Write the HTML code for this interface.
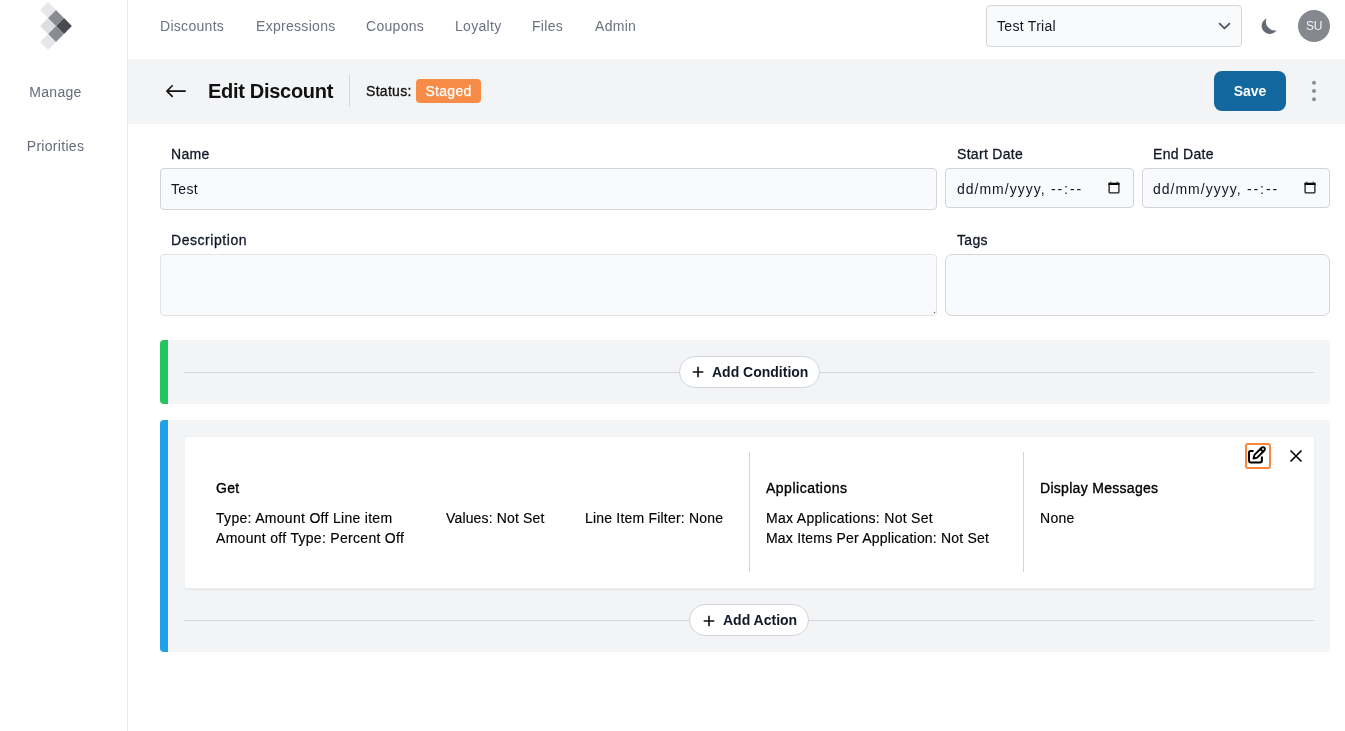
<!DOCTYPE html>
<html><head><meta charset="utf-8">
<style>
*{box-sizing:border-box;margin:0;padding:0}
html,body{width:1345px;height:731px;overflow:hidden;background:#fff;font-family:"Liberation Sans",sans-serif;color:#111827;letter-spacing:0.3px}
.med{-webkit-text-stroke:0.3px currentColor}
.abs{position:absolute}
#side{position:absolute;left:0;top:0;width:128px;height:731px;border-right:1px solid #e5e7eb;background:#fff}
.sidelink{position:absolute;left:0;width:111px;text-align:center;font-size:14px;color:#666c78}
.nav{position:absolute;top:17.5px;font-size:14px;color:#6b7280;white-space:nowrap}
#hdr{position:absolute;left:128px;top:59px;width:1217px;height:65px;background:#f3f4f6}
.lbl{position:absolute;font-size:14px;color:#111827;white-space:nowrap}
.inp{position:absolute;background:#f9fafb;border:1px solid #d1d5db;border-radius:4px}
.itxt{position:absolute;font-size:14px;color:#111827;white-space:nowrap}
.blk{position:absolute;background:#f3f4f6;border-radius:4px;overflow:hidden}
.bar{position:absolute;left:0;top:0;width:8px;height:100%}
.hline{position:absolute;height:1px;background:#d1d5db}
.pill{position:absolute;background:#fff;border:1px solid #d1d5db;border-radius:16px;font-size:14px;font-weight:bold;color:#111827;white-space:nowrap;letter-spacing:0}
.ct{position:absolute;font-size:14px;color:#000;white-space:nowrap;-webkit-text-stroke:0.15px #000}
.ct.med{-webkit-text-stroke:0.35px #000}
</style></head><body><div id="root" style="position:absolute;left:0;top:0;width:1345px;height:731px;will-change:transform">
<div id="side">
  <svg class="abs" style="left:30px;top:0px" width="50" height="55" viewBox="30 0 50 55"><polygon points="48,2.0999999999999996 55.9,10 48,17.9 40.1,10" fill="#e6e7eb"/><polygon points="48,34.1 55.9,42 48,49.9 40.1,42" fill="#e6e7eb"/><polygon points="48,18.1 55.9,26 48,33.9 40.1,26" fill="#dddee2"/><polygon points="56,10.1 63.9,18 56,25.9 48.1,18" fill="#8a8c92"/><polygon points="56,26.1 63.9,34 56,41.9 48.1,34" fill="#8a8c92"/><polygon points="64,18.1 71.9,26 64,33.9 56.1,26" fill="#4a4b51"/></svg>
  <div class="sidelink" style="top:84px">Manage</div>
  <div class="sidelink" style="top:138px">Priorities</div>
</div>

<div class="nav" style="left:160px">Discounts</div>
<div class="nav" style="left:256px">Expressions</div>
<div class="nav" style="left:366px">Coupons</div>
<div class="nav" style="left:455px">Loyalty</div>
<div class="nav" style="left:532px">Files</div>
<div class="nav" style="left:595px">Admin</div>

<div class="inp" style="left:986px;top:5px;width:256px;height:42px;border-radius:4px"></div>
<div class="itxt" style="left:997px;top:18px">Test Trial</div>
<svg class="abs" style="left:1216px;top:20px" width="16" height="12" viewBox="0 0 16 12"><path d="M3.6 3.6L8.5 8.4L13.4 3.6" fill="none" stroke="#4b5563" stroke-width="1.8" stroke-linecap="round" stroke-linejoin="round"/></svg>
<svg class="abs" style="left:1258px;top:15px" width="24" height="22" viewBox="0 0 24 22"><path fill="#646975" d="M8.6 3.4A8.1 8.1 0 1 0 18.6 15.2A8.7 8.7 0 0 1 8.6 3.4Z"/></svg>
<div class="abs" style="left:1298px;top:10px;width:32px;height:32px;border-radius:50%;background:#85888e;color:#f3f4f6;font-size:12px;text-align:center;line-height:32px;letter-spacing:-0.4px">SU</div>

<div id="hdr"></div>
<svg class="abs" style="left:164px;top:83px" width="24" height="16" viewBox="0 0 24 16"><path d="M21.2 8.1H3M8.2 2.8L2.9 8.1l5.3 5.3" fill="none" stroke="#111" stroke-width="1.6" stroke-linecap="round" stroke-linejoin="round"/></svg>
<svg class="abs" style="left:1310px;top:79px" width="8" height="24" viewBox="0 0 8 24"><circle cx="4" cy="3.8" r="2" fill="#8b8e94"/><circle cx="4" cy="11.9" r="2" fill="#8b8e94"/><circle cx="4" cy="20.2" r="2" fill="#8b8e94"/></svg>
<div class="abs" style="left:208px;top:80px;font-size:20px;font-weight:bold;color:#111;letter-spacing:-0.3px">Edit Discount</div>
<div class="abs" style="left:349px;top:75px;width:1px;height:32px;background:#d1d5db"></div>
<div class="abs med" style="left:366px;top:83px;font-size:14px;color:#111">Status:</div>
<div class="abs" style="left:416px;top:79px;width:65px;height:24px;background:#f78c48;border-radius:4px;color:#fff;font-size:14px;text-align:center;line-height:24px;-webkit-text-stroke:0.25px #fff">Staged</div>
<div class="abs" style="left:1214px;top:71px;width:72px;height:40px;background:#12679f;border-radius:8px;color:#fff;font-size:14px;font-weight:bold;text-align:center;line-height:40px;letter-spacing:0">Save</div>

<div class="lbl med" style="left:171px;top:146px">Name</div>
<div class="inp" style="left:160px;top:168px;width:777px;height:42px"></div>
<div class="itxt" style="left:171px;top:181px">Test</div>

<div class="lbl med" style="left:957px;top:146px">Start Date</div>
<div class="inp" style="left:945px;top:168px;width:189px;height:40px"></div>
<div class="itxt" style="left:957px;top:181px;letter-spacing:1px">dd/mm/yyyy,</div><div class="itxt" style="left:1051px;top:181px;letter-spacing:1.9px">--:--</div>

<svg class="abs" style="left:1108px;top:180px" width="12" height="14" viewBox="0 0 12 14"><rect x="1.1" y="3.6" width="9.8" height="9.2" rx="0.7" fill="none" stroke="#1a1a1a" stroke-width="1.3"/><rect x="0.45" y="2.7" width="11.1" height="2.3" fill="#000"/><rect x="2.2" y="1.6" width="1" height="1.4" fill="#222"/><rect x="8.8" y="1.6" width="1" height="1.4" fill="#222"/></svg>
<div class="lbl med" style="left:1153px;top:146px">End Date</div>
<div class="inp" style="left:1142px;top:168px;width:188px;height:40px"></div>
<div class="itxt" style="left:1153px;top:181px;letter-spacing:1px">dd/mm/yyyy,</div><div class="itxt" style="left:1247px;top:181px;letter-spacing:1.9px">--:--</div>

<svg class="abs" style="left:1304px;top:180px" width="12" height="14" viewBox="0 0 12 14"><rect x="1.1" y="3.6" width="9.8" height="9.2" rx="0.7" fill="none" stroke="#1a1a1a" stroke-width="1.3"/><rect x="0.45" y="2.7" width="11.1" height="2.3" fill="#000"/><rect x="2.2" y="1.6" width="1" height="1.4" fill="#222"/><rect x="8.8" y="1.6" width="1" height="1.4" fill="#222"/></svg>
<div class="lbl med" style="left:171px;top:232px;letter-spacing:0.55px">Description</div>
<div class="inp" style="left:160px;top:254px;width:777px;height:62px;border-color:#e0e3e7"></div>
<svg class="abs" style="left:929px;top:307px" width="7" height="7" viewBox="0 0 7 7"><circle cx="5.5" cy="5.5" r="0.7" fill="#555"/></svg>
<div class="lbl med" style="left:957px;top:232px">Tags</div>
<div class="inp" style="left:945px;top:254px;width:385px;height:62px;border-radius:7px"></div>

<div class="blk" style="left:160px;top:340px;width:1170px;height:64px">
  <div class="bar" style="background:#22c55e"></div>
</div>
<div class="hline" style="left:184px;top:372px;width:1130px"></div>
<div class="pill" style="left:679px;top:356px;width:141px;height:32px;line-height:30px;padding-left:32px">Add Condition</div>
<svg class="abs" style="left:692px;top:366px" width="12" height="12" viewBox="0 0 12 12"><path d="M6 0.7v10.6M0.7 6h10.6" stroke="#111" stroke-width="1.6"/></svg>

<div class="blk" style="left:160px;top:420px;width:1170px;height:232px">
  <div class="bar" style="background:#1ea1e6"></div>
</div>
<div class="abs" style="left:184px;top:436px;width:1131px;height:153px;background:#fff;border-radius:3px;border:1px solid #eceef1;border-left-color:#f1f2f4;border-top-color:#eef0f2;box-shadow:0 1px 1px rgba(0,0,0,.06)"></div>
<div class="hline" style="left:184px;top:620px;width:1130px"></div>
<div class="pill" style="left:689px;top:604px;width:120px;height:32px;line-height:30px;padding-left:33px">Add Action</div>
<svg class="abs" style="left:703px;top:614.5px" width="12" height="12" viewBox="0 0 12 12"><path d="M6 0.7v10.6M0.7 6h10.6" stroke="#111" stroke-width="1.6"/></svg>

<svg class="abs" style="left:1245px;top:443px" width="26" height="26" viewBox="0 0 26 26">
<rect x="1" y="1" width="24" height="24" rx="2" fill="#fff" stroke="#f7883b" stroke-width="2"/>
<path d="M8.5 8H5.5a1.5 1.5 0 0 0-1.5 1.5v8.1a2 2 0 0 0 2 2h8.9a2 2 0 0 0 2-2v-4.2" fill="none" stroke="#000" stroke-width="2"/>
<g transform="translate(0.6 1.4) scale(0.92)"><path d="M20.385 6.585a2.1 2.1 0 0 0-2.97-2.97L9.6 11.4 8.6 15.4 12.6 14.4z" fill="none" stroke="#000" stroke-width="2.1" stroke-linejoin="round"/><path d="M16 5l3 3" stroke="#000" stroke-width="2"/></g>
</svg>
<svg class="abs" style="left:1288px;top:448px" width="16" height="16" viewBox="0 0 16 16"><path d="M2.5 2.5l11 11M13.5 2.5l-11 11" stroke="#000" stroke-width="1.6"/></svg>
<div class="ct med" style="left:216px;top:480px">Get</div>
<div class="ct" style="left:216px;top:510px">Type: Amount Off Line item</div>
<div class="ct" style="left:216px;top:530px">Amount off Type: Percent Off</div>
<div class="ct" style="left:446px;top:510px;letter-spacing:0.15px">Values: Not Set</div>
<div class="ct" style="left:585px;top:510px;letter-spacing:0.2px">Line Item Filter: None</div>
<div class="abs" style="left:749px;top:452px;width:1px;height:120px;background:#d1d5db"></div>
<div class="ct med" style="left:766px;top:480px;letter-spacing:0.5px">Applications</div>
<div class="ct" style="left:766px;top:510px">Max Applications: Not Set</div>
<div class="ct" style="left:766px;top:530px;letter-spacing:0.2px">Max Items Per Application: Not Set</div>
<div class="abs" style="left:1023px;top:452px;width:1px;height:120px;background:#d1d5db"></div>
<div class="ct med" style="left:1040px;top:480px">Display Messages</div>
<div class="ct" style="left:1040px;top:510px">None</div>
</div></body></html>
